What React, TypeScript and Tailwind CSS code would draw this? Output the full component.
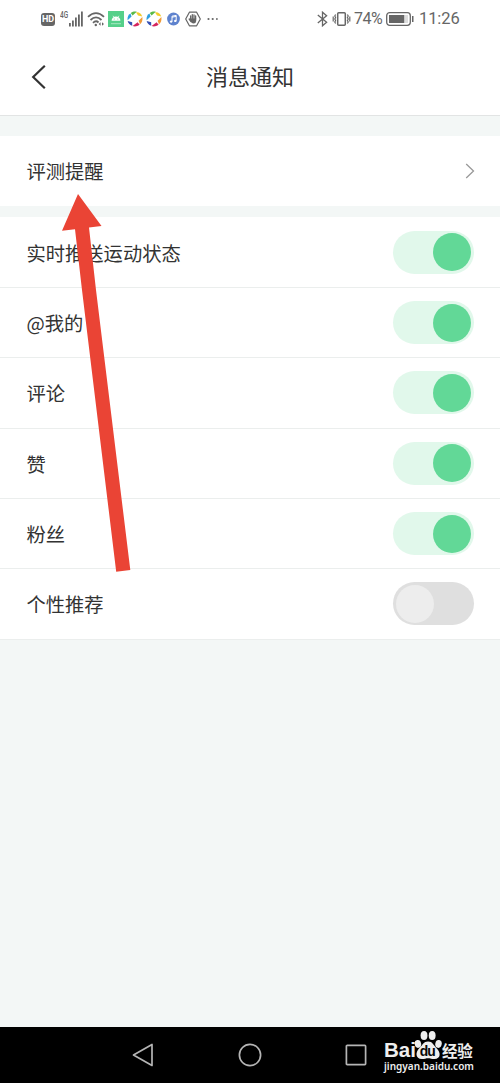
import { useState } from "react";

const settings = [
  { label: "实时推送运动状态", on: true },
  { label: "@我的", on: true },
  { label: "评论", on: true },
  { label: "赞", on: true },
  { label: "粉丝", on: true },
  { label: "个性推荐", on: false },
];

function BallIcon() {
  return (
    <svg width="16" height="16" viewBox="0 0 16 16">
      <path d="M0.6 9.2C0.2 5.8 1.4 3.6 3.4 2.4L4.6 5.4Z" fill="#2f9fe0" />
      <path d="M3.8 2C6 0.4 8 0.3 9.8 0.8L5.6 4.6Z" fill="#58b947" />
      <path d="M9 1.2C12.4 0.8 14.4 2.6 15.2 5.4L11 4.6Z" fill="#f3cd2b" />
      <path d="M15.4 6C15.8 9.6 14.8 11.8 13 13.2L11.6 9.8Z" fill="#f09a38" />
      <path d="M12.6 13.8C10 15.6 7.6 15.8 5.6 15L10.6 11.2Z" fill="#d5245c" />
      <path d="M5.2 14.8C2.6 14 1 12 0.7 10L5.2 11.2Z" fill="#3550b4" />
    </svg>
  );
}

function StatusBar() {
  return (
    <div className="flex h-[38px] items-center justify-between pl-[41px] pr-[41px] text-[#666]">
      {/* LEFT */}
      <div className="flex items-center">
        <span className="flex h-[13px] w-[14px] items-center justify-center rounded-[3px] bg-[#666] font-['Roboto'] text-[9px] font-bold leading-none text-white">
          HD
        </span>

        <span className="ml-[5px] -mt-[8px] w-[8px] font-['Roboto'] text-[9px] leading-none font-medium">
          <span className="inline-block origin-left scale-x-[0.72]">4G</span>
        </span>
        <svg className="ml-[1px]" width="14" height="16" viewBox="0 0 14 16" fill="#666">
          <rect x="0" y="12" width="1.8" height="3.5" />
          <rect x="3" y="9.5" width="1.8" height="6" />
          <rect x="6" y="6.5" width="1.8" height="9" />
          <rect x="9" y="3.5" width="1.8" height="12" />
          <rect x="12" y="0.5" width="1.8" height="15" />
        </svg>

        <svg className="ml-[4px]" width="18" height="16" viewBox="0 0 18 16" fill="none" stroke="#666" strokeWidth="1.8">
          <path d="M1 5.8Q9 -1.6 17 5.8" />
          <path d="M3.5 9Q9 3.8 14.5 9" />
          <path d="M6 11.8Q9 9 11.5 11.5" />
          <circle cx="8.8" cy="14" r="1.2" fill="#666" stroke="none" />
          <path d="M13.6 11.2L11.6 13L13.6 14.8ZM15 11.2L17 13L15 14.8Z" fill="#666" stroke="none" />
        </svg>

        <svg className="ml-[3px]" width="16" height="16" viewBox="0 0 16 16">
          <rect width="16" height="16" fill="#55d08a" />
          <path d="M3.6 9.8A4.4 4.2 0 0 1 12.4 9.8Z" fill="#fff" />
          <path d="M5 4.8L6 6.5M11 4.8L10 6.5" stroke="#fff" strokeWidth="0.7" />
          <path d="M3 12.7H13" stroke="#a5e8c1" />
          <circle cx="6.2" cy="8" r="0.5" fill="#55d08a" />
          <circle cx="9.8" cy="8" r="0.5" fill="#55d08a" />
        </svg>

        <div className="ml-[3px] flex gap-[3px]">
          <BallIcon />
          <BallIcon />
        </div>

        <svg className="ml-[5px]" width="13" height="14" viewBox="0 0 13 14">
          <circle cx="6.5" cy="7" r="6.4" fill="#5f83ce" />
          <path d="M5 9.5V4.2L9.2 3.4V8.8M5 5.2L9.2 4.4" fill="none" stroke="#fff" strokeWidth="1" />
          <circle cx="4.1" cy="9.6" r="1.2" fill="#fff" />
          <circle cx="8.3" cy="8.9" r="1.2" fill="#fff" />
        </svg>

        <svg className="ml-[5px]" width="16" height="16" viewBox="0 0 16 16" fill="none" stroke="#666">
          <path d="M4.4 1.2H11.6L15.3 8L11.6 14.8H4.4L0.7 8Z" strokeWidth="1.2" strokeLinejoin="round" />
          <path d="M5.6 8V5M7.3 8V3.6M9 8V3.8M10.6 8V5M4.2 8L6 10.5" strokeWidth="1.3" strokeLinecap="round" />
          <path d="M5 7.5H11.2V10Q11 12.5 8.6 12.5Q6.4 12.5 5 9.5Z" fill="#666" stroke="none" />
        </svg>

        <svg className="ml-[6px]" width="12" height="4" viewBox="0 0 12 4" fill="#666">
          <circle cx="1.5" cy="2" r="1.1" />
          <circle cx="5.7" cy="2" r="1.1" />
          <circle cx="9.9" cy="2" r="0.9" />
        </svg>
      </div>

      {/* RIGHT */}
      <div className="flex items-center font-['Roboto'] text-[16.5px] leading-none">
        <svg width="11" height="16" viewBox="0 0 11 16" fill="none" stroke="#666" strokeWidth="1.3">
          <path d="M0.8 4L9.6 11.3L5.5 14.8V1.2L9.6 4.7L0.8 12" />
        </svg>
        <svg className="ml-[4px]" width="19" height="16" viewBox="0 0 19 16" fill="none" stroke="#666">
          <rect x="5.7" y="1.7" width="7.6" height="12.6" rx="1" strokeWidth="1.5" />
          <path
            d="M3.6 3.5L2.8 5L3.6 6.5L2.8 8L3.6 9.5L2.8 11L3.6 12.5M1.2 5.5V10.5M15.4 3.5L16.2 5L15.4 6.5L16.2 8L15.4 9.5L16.2 11L15.4 12.5M17.8 5.5V10.5"
            strokeWidth="1.2"
          />
        </svg>
        <span className="ml-[3px] w-[30px] whitespace-nowrap text-[16px] tracking-[-0.5px]">74%</span>
        <svg className="ml-[2px]" width="28" height="16" viewBox="0 0 28 16">
          <rect x="0.7" y="1.7" width="23.6" height="12.6" rx="3" fill="none" stroke="#666" strokeWidth="1.3" />
          <rect x="3" y="4" width="15.5" height="8" fill="#666" />
          <rect x="18.5" y="4" width="3.5" height="8" fill="#ddd" />
          <rect x="26" y="5" width="1.5" height="6" fill="#666" />
        </svg>
        <span className="ml-[5px] w-[40px] whitespace-nowrap tracking-[-0.1px]">11:26</span>
      </div>
    </div>
  );
}

function Toggle({ on, onClick }: { on: boolean; onClick: () => void }) {
  return (
    <button
      onClick={onClick}
      className={`flex h-[43px] w-[81px] items-center rounded-full px-[3px] ${
        on ? "justify-end bg-[#e1f8eb]" : "justify-start bg-[#dfdfdf]"
      }`}
    >
      <span className={`h-[38px] w-[38px] rounded-full ${on ? "bg-[#62d897]" : "bg-[#ededed]"}`} />
    </button>
  );
}

function BaiduLogo() {
  return (
    <div className="flex w-[92px] flex-col text-[#eee]">
      <div className="flex h-[30px] items-end">
        <span className="w-[30px] font-['Liberation_Sans'] text-[20.5px] font-bold leading-[20px]">
          Bai
        </span>
        <svg className="shrink-0" width="28" height="30" viewBox="0 0 26 28" fill="#eee">
          <ellipse cx="3.6" cy="13" rx="3" ry="3.7" transform="rotate(-12 3.6 13)" />
          <ellipse cx="9.3" cy="5.2" rx="3.2" ry="4.2" />
          <ellipse cx="16.9" cy="5.2" rx="3.2" ry="4.2" />
          <ellipse cx="22.8" cy="13" rx="3" ry="3.7" transform="rotate(12 22.8 13)" />
          <path d="M13 10.8C8.8 10.8 8.2 14 5 16.8C1 20.6 1.2 27 7.2 27C10 27 11 26.3 13 26.3C15.3 26.3 16.3 27 19 27C25 27 25.2 20.8 21 17C17.8 14.2 17.5 10.8 13 10.8Z" />
          <text x="5.2" y="24.4" fill="#080808" fontFamily="Liberation Sans" fontWeight="bold" fontSize="13" textLength="15">
            du
          </text>
        </svg>
        <span className="whitespace-nowrap font-['Noto_Sans_CJK_SC'] text-[15.5px] font-bold leading-[19px] tracking-[-0.3px]">
          经验
        </span>
      </div>
      <span className="-mt-[1px] whitespace-nowrap font-['Noto_Sans'] text-[10px] font-semibold leading-[14px]">
        jingyan.baidu.com
      </span>
    </div>
  );
}

export default function App() {
  const [items, setItems] = useState(settings);

  const toggle = (index: number) => {
    setItems(items.map((item, i) => (i === index ? { ...item, on: !item.on } : item)));
  };

  return (
    <div className="relative flex h-[1083px] w-[500px] flex-col overflow-hidden bg-[#f3f7f6] font-['Noto_Sans_CJK_SC',sans-serif] text-[#333]">
      <div className="h-[116px] border-b border-[#e2e4e4] bg-white">
        <StatusBar />
        <header className="grid h-[77px] grid-cols-[100px_1fr_100px] items-center">
          <button className="pl-[31px]">
            <svg width="16" height="26" viewBox="0 0 16 26" fill="none" stroke="#333" strokeWidth="2.2">
              <path d="M13.8 1.8L2.2 13L13.8 24.2" />
            </svg>
          </button>
          <h1 className="pb-[3px] text-center text-[22px] leading-none">消息通知</h1>
        </header>
      </div>

      <div className="mt-[20px] flex h-[70px] items-center justify-between bg-white pl-[26.5px] pr-[25px] text-[19.3px]">
        <span>评测提醒</span>
        <svg width="10" height="16" viewBox="0 0 10 16" fill="none" stroke="#999" strokeWidth="1.3">
          <path d="M1.2 1L8.5 8L1.2 15" />
        </svg>
      </div>

      <div className="mt-[11px] bg-white pt-[0.6px]">
        {items.map((item, i) => (
          <div
            key={item.label}
            className="flex h-[70.35px] items-center justify-between border-b border-[#ebeeed] pl-[26.5px] pr-[26px] text-[19.3px]"
          >
            <span className="pt-[1.5px]">{item.label}</span>
            <Toggle on={item.on} onClick={() => toggle(i)} />
          </div>
        ))}
      </div>

      {/* Navigation bar */}
      <div className="mt-auto flex h-[56px] items-center bg-black">
        <div className="flex w-[235px] shrink-0 justify-end pr-[81px]">
          <svg width="22" height="24" viewBox="0 0 22 24" fill="none" stroke="#b5b5b5" strokeWidth="1.7">
            <path d="M20 1.5V22.5L1.5 12Z" strokeLinejoin="round" />
          </svg>
        </div>
        <svg className="ml-[3px]" width="24" height="24" viewBox="0 0 24 24" fill="none" stroke="#b5b5b5" strokeWidth="1.7">
          <circle cx="12" cy="12" r="10.6" />
        </svg>
        <svg className="ml-[83px]" width="22" height="22" viewBox="0 0 22 22" fill="none" stroke="#b5b5b5" strokeWidth="1.7">
          <rect x="1.4" y="1.4" width="19.2" height="19.2" rx="0.8" />
        </svg>
        <div className="ml-[17px] -mt-[8px]">
          <BaiduLogo />
        </div>
      </div>

      {/* Pointer */}
      <svg className="pointer-events-none absolute left-[60px] top-[192px]" width="74" height="382" viewBox="60 192 74 382">
        <path d="M78 194L101.5 226L89 227.5L96 290L130.3 570L116.2 571.8L82 290L75 229.2L62 230.8Z" fill="#ea4435" />
      </svg>
    </div>
  );
}
